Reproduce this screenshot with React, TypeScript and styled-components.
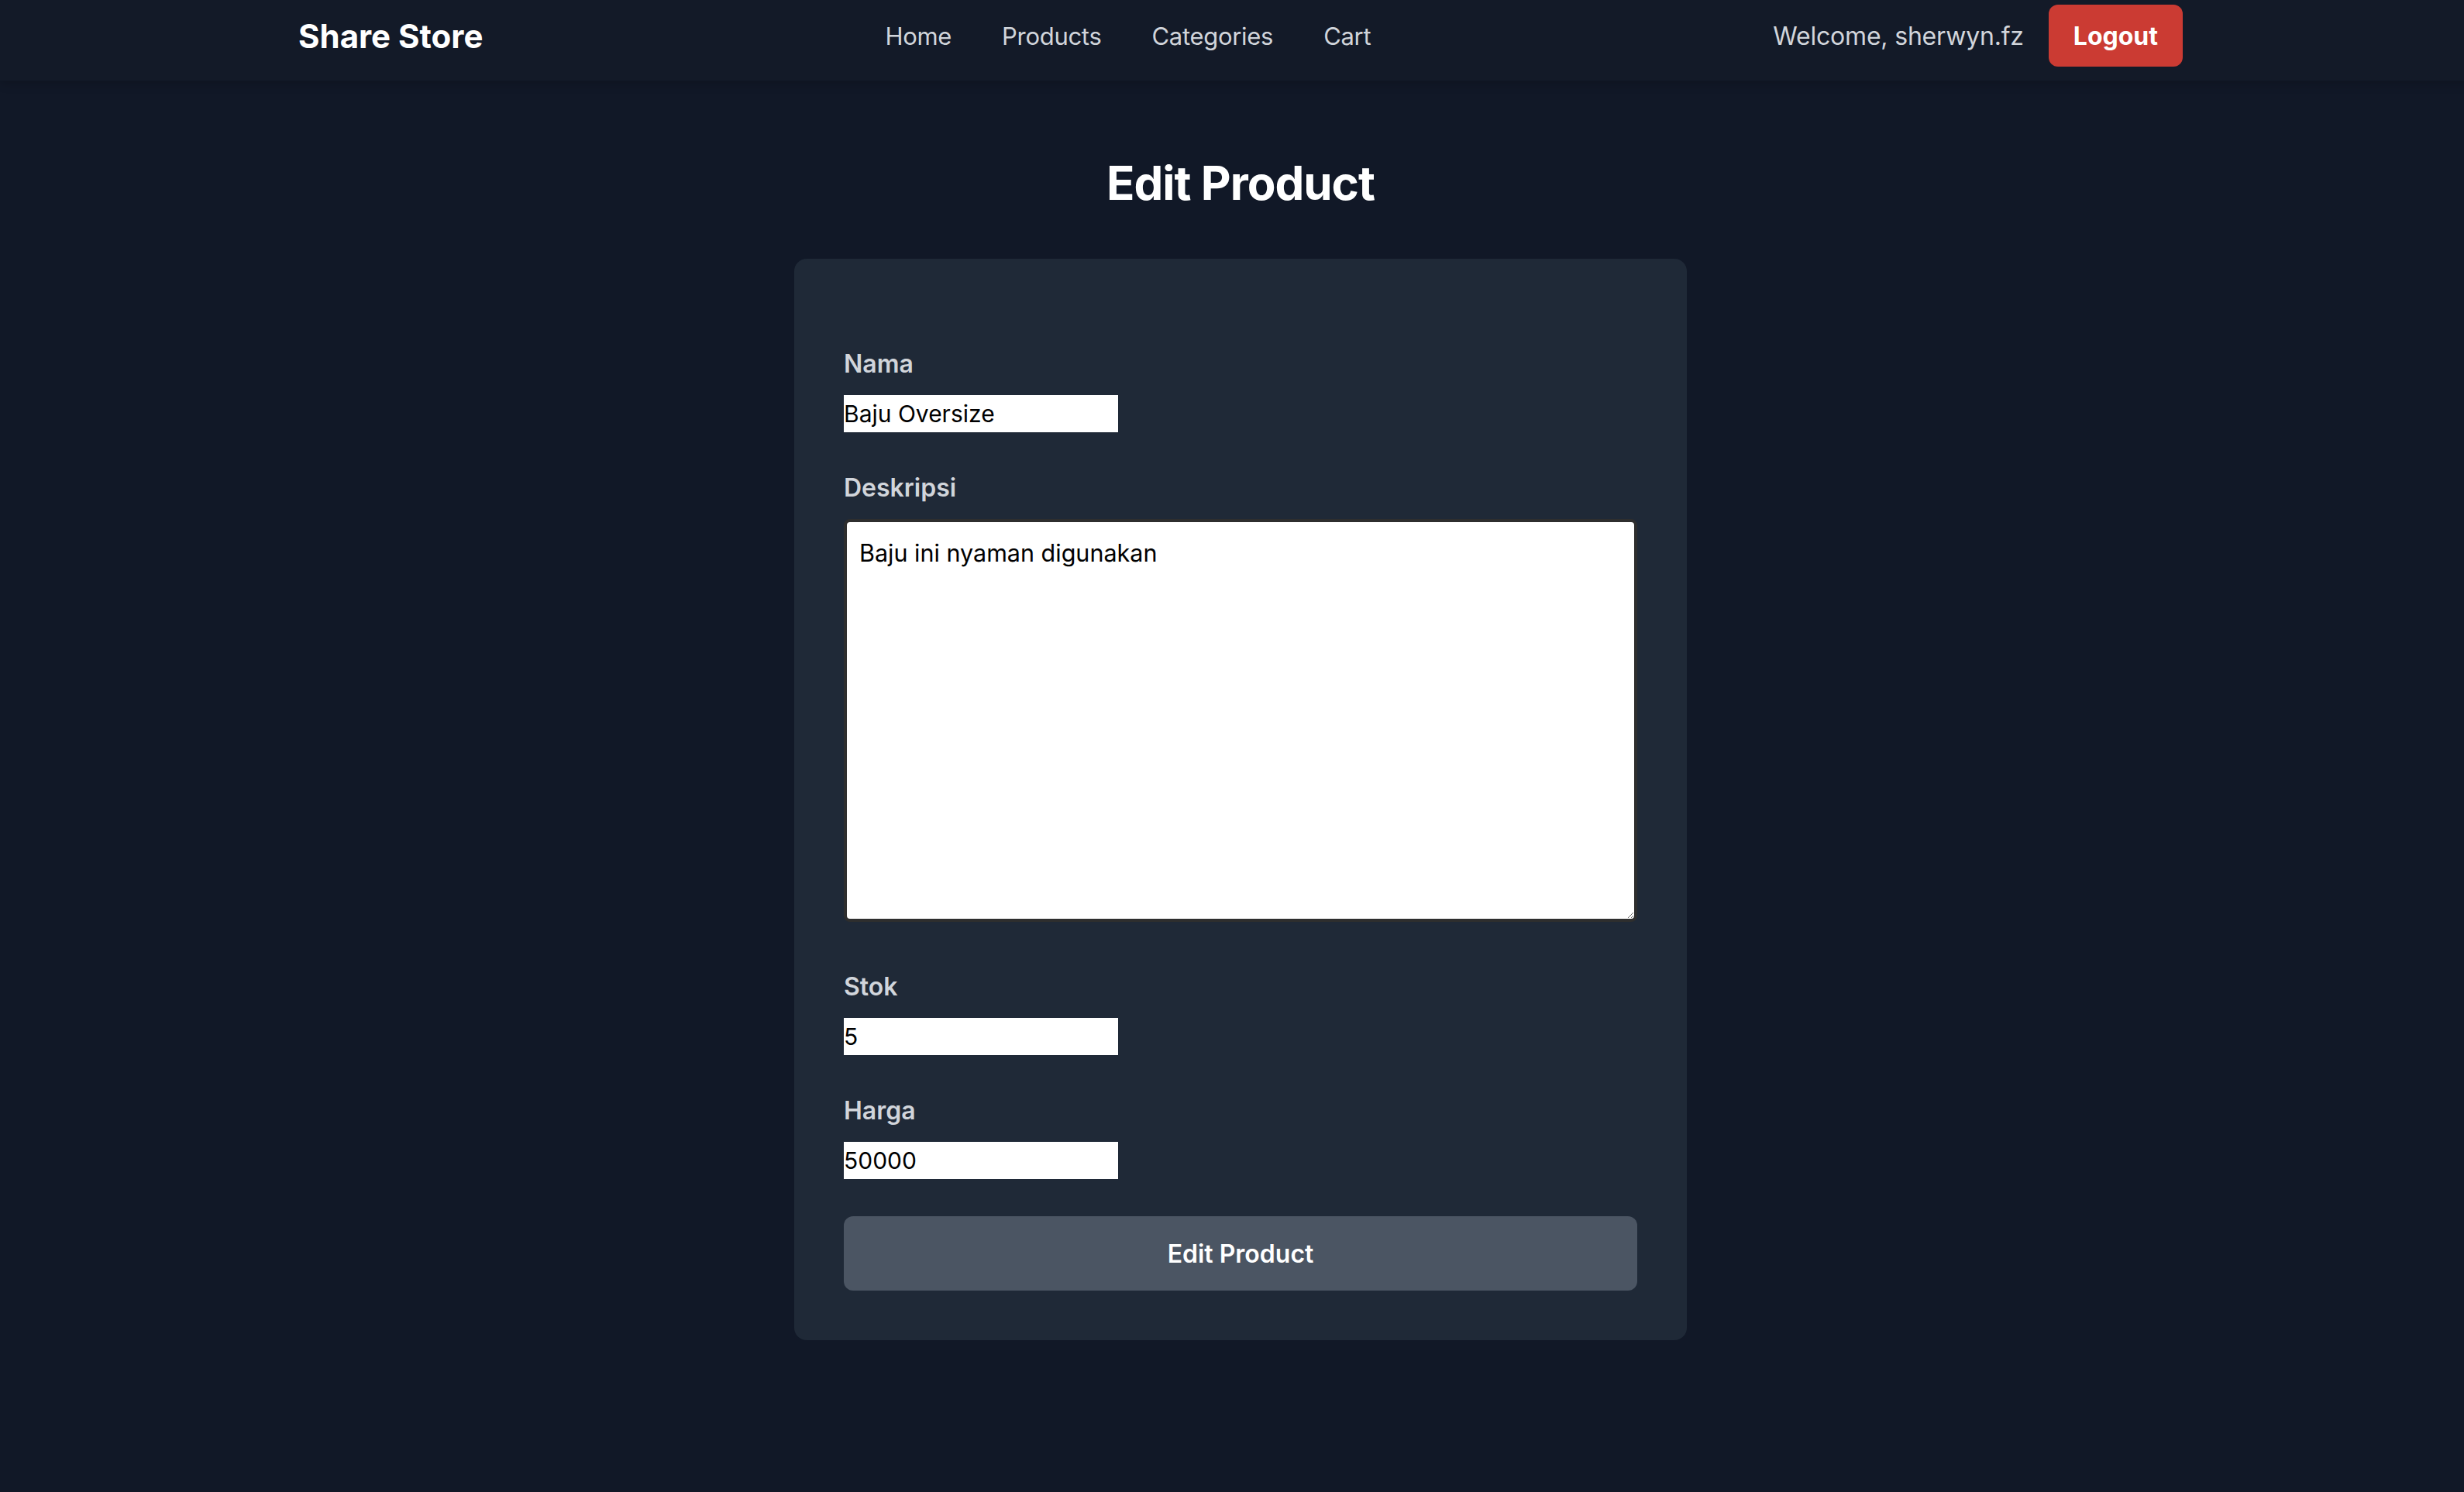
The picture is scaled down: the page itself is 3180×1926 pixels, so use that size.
import React from "react";
import styled, { createGlobalStyle } from "styled-components";

const GlobalStyle = createGlobalStyle`
  html, body {
    margin: 0;
    padding: 0;
    background: #111827;
    overflow-x: hidden;
  }
  body {
    font-family: Inter, "Noto Sans", "Liberation Sans", sans-serif;
    color: #ffffff;
  }
  *, *::before, *::after { box-sizing: border-box; }
`;

const Page = styled.div`
  width: 3202px;
  min-height: 1926px;
  background: #111827;
`;

const Nav = styled.nav`
  height: 104px;
  background: #131a28;
  box-shadow: 0 4px 12px rgba(0, 0, 0, 0.18);
  padding-top: 6px;
`;

const NavInner = styled.div`
  max-width: 2560px;
  margin: 0 auto;
  padding: 0 64px;
  height: 80px;
  display: flex;
  align-items: center;
  justify-content: space-between;
`;

const Brand = styled.div`
  font-size: 42px;
  font-weight: 700;
  color: #ffffff;
`;

const Links = styled.div`
  display: flex;
  gap: 65px;
`;

const NavLink = styled.a`
  font-size: 31px;
  letter-spacing: -0.3px;
  color: #d1d5db;
  text-decoration: none;
`;

const UserArea = styled.div`
  display: flex;
  align-items: center;
  gap: 32px;
`;

const Welcome = styled.span`
  font-size: 32px;
  letter-spacing: -0.2px;
  color: #d1d5db;
`;

const LogoutButton = styled.button`
  height: 80px;
  padding: 0 32px;
  border: 0;
  border-radius: 12px;
  background: #cb3b33;
  color: #ffffff;
  font-family: inherit;
  font-size: 32px;
  font-weight: 700;
`;

const Main = styled.main`
  padding-top: 96px;
  padding-bottom: 96px;
`;

const Title = styled.h1`
  margin: 0 0 62px;
  text-align: center;
  font-size: 60px;
  line-height: 72px;
  font-weight: 700;
  letter-spacing: -1px;
  color: #ffffff;
`;

const Card = styled.form`
  width: 1152px;
  margin: 0 auto;
  background: #1f2937;
  border-radius: 16px;
  padding: 112px 64px 64px;
`;

const Field = styled.div<{ $after: number }>`
  margin-bottom: ${(p) => p.$after}px;
`;

const Label = styled.label`
  display: block;
  margin-bottom: 16px;
  font-size: 32px;
  line-height: 48px;
  font-weight: 600;
  color: #d1d5db;
`;

const TextInput = styled.input`
  display: block;
  width: 354px;
  height: 48px;
  padding: 0;
  border: 0;
  outline: none;
  background: #ffffff;
  color: #000000;
  font-family: inherit;
  font-size: 30px;
  line-height: 48px;
`;

const TextArea = styled.textarea`
  display: block;
  width: 100%;
  height: 520px;
  padding: 16px;
  border: 4px solid #2e2e2e;
  border-radius: 8px;
  background: #ffffff;
  color: #000000;
  font-family: inherit;
  font-size: 30.5px;
  line-height: 48px;
  resize: vertical;
  outline: none;
`;

const SubmitButton = styled.button`
  display: block;
  width: 100%;
  height: 96px;
  border: 0;
  border-radius: 12px;
  background: #4b5563;
  color: #ffffff;
  font-family: inherit;
  font-size: 32px;
  font-weight: 600;
`;

export default function App() {
  return (
    <Page>
      <GlobalStyle />
      <Nav>
        <NavInner>
          <Brand>Share Store</Brand>
          <Links>
            <NavLink href="#">Home</NavLink>
            <NavLink href="#">Products</NavLink>
            <NavLink href="#">Categories</NavLink>
            <NavLink href="#">Cart</NavLink>
          </Links>
          <UserArea>
            <Welcome>Welcome, sherwyn.fz</Welcome>
            <LogoutButton type="button">Logout</LogoutButton>
          </UserArea>
        </NavInner>
      </Nav>
      <Main>
        <Title>Edit Product</Title>
        <Card onSubmit={(e) => e.preventDefault()}>
          <Field $after={48}>
            <Label htmlFor="nama">Nama</Label>
            <TextInput id="nama" type="text" defaultValue="Baju Oversize" />
          </Field>
          <Field $after={60}>
            <Label htmlFor="deskripsi">Deskripsi</Label>
            <TextArea id="deskripsi" rows={10} defaultValue="Baju ini nyaman digunakan" />
          </Field>
          <Field $after={48}>
            <Label htmlFor="stok">Stok</Label>
            <TextInput id="stok" type="number" defaultValue="5" />
          </Field>
          <Field $after={48}>
            <Label htmlFor="harga">Harga</Label>
            <TextInput id="harga" type="number" defaultValue="50000" />
          </Field>
          <SubmitButton type="submit">Edit Product</SubmitButton>
        </Card>
      </Main>
    </Page>
  );
}
